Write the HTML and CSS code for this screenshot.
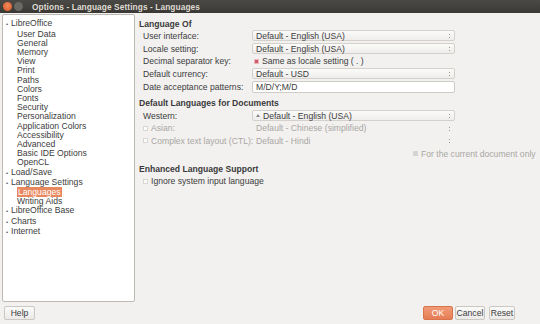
FILE: index.html
```html
<!DOCTYPE html>
<html>
<head>
<meta charset="utf-8">
<link rel="stylesheet" href="styles.css">
</head>
<body>
<div class="window">
  <div class="titlebar">
    <span class="tb-close"></span>
    <span class="tb-min"></span>
    <span class="tb-title">Options - Language Settings - Languages</span>
  </div>
  <div class="main">
    <div class="tree">
      <div class="node"><span class="bullet">•</span>LibreOffice</div>
      <div class="leaf">User Data</div>
      <div class="leaf">General</div>
      <div class="leaf">Memory</div>
      <div class="leaf">View</div>
      <div class="leaf">Print</div>
      <div class="leaf">Paths</div>
      <div class="leaf">Colors</div>
      <div class="leaf">Fonts</div>
      <div class="leaf">Security</div>
      <div class="leaf">Personalization</div>
      <div class="leaf">Application Colors</div>
      <div class="leaf">Accessibility</div>
      <div class="leaf">Advanced</div>
      <div class="leaf">Basic IDE Options</div>
      <div class="leaf">OpenCL</div>
      <div class="node"><span class="bullet">•</span>Load/Save</div>
      <div class="node"><span class="bullet">•</span>Language Settings</div>
      <div class="leaf"><span class="sel">Languages</span></div>
      <div class="leaf">Writing Aids</div>
      <div class="node"><span class="bullet">•</span>LibreOffice Base</div>
      <div class="node"><span class="bullet">•</span>Charts</div>
      <div class="node"><span class="bullet">•</span>Internet</div>
    </div>
    <div class="panel">
      <div class="hdr">Language Of</div>
      <div class="row">
        <span class="label">User interface:</span>
        <span class="combo">Default - English (USA)<span class="spin"></span></span>
      </div>
      <div class="row">
        <span class="label">Locale setting:</span>
        <span class="combo">Default - English (USA)<span class="spin"></span></span>
      </div>
      <div class="row">
        <span class="label">Decimal separator key:</span>
        <span class="check-ctl"><span class="cb checked"></span>Same as locale setting ( . )</span>
      </div>
      <div class="row">
        <span class="label">Default currency:</span>
        <span class="combo">Default - USD<span class="spin"></span></span>
      </div>
      <div class="row">
        <span class="label">Date acceptance patterns:</span>
        <span class="entry">M/D/Y;M/D</span>
      </div>

      <div class="hdr hdr2">Default Languages for Documents</div>
      <div class="row">
        <span class="label">Western:</span>
        <span class="combo"><span class="mark"></span>Default - English (USA)<span class="spin"></span></span>
      </div>
      <div class="row dis">
        <span class="label"><span class="cb"></span>Asian:</span>
        <span class="combo flat">Default - Chinese (simplified)<span class="spin"></span></span>
      </div>
      <div class="row dis">
        <span class="label"><span class="cb"></span>Complex text layout (CTL):</span>
        <span class="combo flat">Default - Hindi<span class="spin"></span></span>
      </div>
      <div class="row dis">
        <span class="current"><span class="cb gray"></span>For the current document only</span>
      </div>

      <div class="hdr hdr3">Enhanced Language Support</div>
      <div class="row">
        <span class="label"><span class="cb"></span>Ignore system input language</span>
      </div>
    </div>
  </div>
  <div class="footer">
    <button class="btn help">Help</button>
    <span class="spacer"></span>
    <button class="btn ok">OK</button>
    <button class="btn cancel">Cancel</button>
    <button class="btn reset">Reset</button>
  </div>
</div>
</body>
</html>
```
FILE: styles.css
```css
* { box-sizing: border-box; }
html, body {
  margin: 0;
  padding: 0;
  width: 540px;
  height: 324px;
  overflow: hidden;
  background: #f2f1f0;
  font-family: "Liberation Sans", "DejaVu Sans", sans-serif;
  font-size: 8.6px;
  color: #3c3c3c;
}
.window {
  width: 540px;
  height: 324px;
  display: flex;
  flex-direction: column;
}
.titlebar {
  height: 13px;
  background: linear-gradient(#4a4945, #3a3935);
  display: flex;
  align-items: center;
  padding-left: 3px;
  color: #dfdbd2;
  font-weight: bold;
  font-size: 8.3px;
}
.tb-close {
  width: 9px; height: 9px; border-radius: 50%;
  background: radial-gradient(circle at 50% 40%, #f08a5d, #d95322);
  margin-right: 2px;
}
.tb-min {
  width: 9px; height: 9px; border-radius: 50%;
  background: #6a6964;
  margin-right: 9px;
}
.tb-title { letter-spacing: 0.1px; }
.main {
  display: flex;
  height: 289px;
  padding: 1px 0 0 2px;
}
.tree {
  width: 133px;
  height: 288px;
  background: #fff;
  border: 1px solid #bdbab5;
  border-radius: 2px;
  padding-top: 4.4px;
  padding-left: 0;
  line-height: 9.2px;
  color: #3c3c3c;
}
.node { position: relative; padding-left: 8px; }
.bullet {
  display: inline-block;
  width: 8px;
  margin-left: -5px;
  margin-right: -3px;
  font-size: 6px;
  color: #555;
}
.leaf { padding-left: 14px; }
.sel {
  background: #e9875f;
  color: #fff;
  padding: 0 1px;
}
.panel {
  flex: 1;
  padding: 4.5px 0 0 4px;
}
.hdr {
  height: 11px;
  line-height: 11px;
  font-weight: bold;
  color: #3a3a3a;
}
.hdr2 { margin-top: 5.3px; }
.hdr3 { margin-top: 4px; }
.row {
  height: 12.7px;
  display: flex;
  align-items: center;
  padding-left: 4px;
}
.label {
  width: 109px;
  display: flex;
  align-items: center;
  white-space: nowrap;
}
.combo {
  position: relative;
  width: 203px;
  height: 11px;
  line-height: 10px;
  padding-left: 3px;
  border: 1px solid #d4d1cc;
  border-radius: 2px;
  background: linear-gradient(#fbfbfa, #eeedeb);
  display: flex;
  align-items: center;
}
.combo.flat {
  border-color: transparent;
  background: transparent;
}
.spin {
  position: absolute;
  right: 4px;
  top: 3px;
  width: 1px;
  height: 4px;
  border-top: 1px solid #999;
  border-bottom: 1px solid #999;
}
.mark {
  display: inline-block;
  width: 0; height: 0;
  border-left: 2px solid transparent;
  border-right: 2px solid transparent;
  border-bottom: 3px solid #888;
  margin-right: 3px;
}
.entry {
  width: 203px;
  height: 12px;
  line-height: 10px;
  padding-left: 3px;
  border: 1px solid #cfccc7;
  border-radius: 2px;
  background: #fff;
  display: flex;
  align-items: center;
}
.check-ctl {
  display: flex;
  align-items: center;
  padding-left: 2px;
}
.cb {
  display: inline-block;
  width: 5px; height: 5px;
  border: 1px solid #d8d6d2;
  background: #fbfbfa;
  margin-right: 3px;
  flex: none;
}
.cb.checked {
  background: #d25a6a;
  border-color: #e8b7bd;
}
.cb.gray {
  background: #d6d4d0;
  border-color: #d6d4d0;
}
.row.dis { color: #a9a7a3; }
.current {
  margin-left: 270px;
  display: flex;
  align-items: center;
}
.footer {
  display: flex;
  align-items: flex-start;
  padding: 4px 25px 0 4px;
  height: 22px;
}
.spacer { flex: 1; }
.btn {
  height: 14px;
  padding: 0;
  font-family: inherit;
  font-size: 8.6px;
  color: #3c3c3c;
  border: 1px solid #cbc8c3;
  border-radius: 2px;
  background: linear-gradient(#fafaf9, #ebeae8);
  line-height: 12px;
}
.help { width: 31px; }
.ok {
  width: 30px;
  background: linear-gradient(#f19b77, #e57d55);
  border-color: #d8734c;
  color: #fff;
}
.cancel { width: 30px; margin-left: 2px; }
.reset { width: 26px; margin-left: 4px; }
```
